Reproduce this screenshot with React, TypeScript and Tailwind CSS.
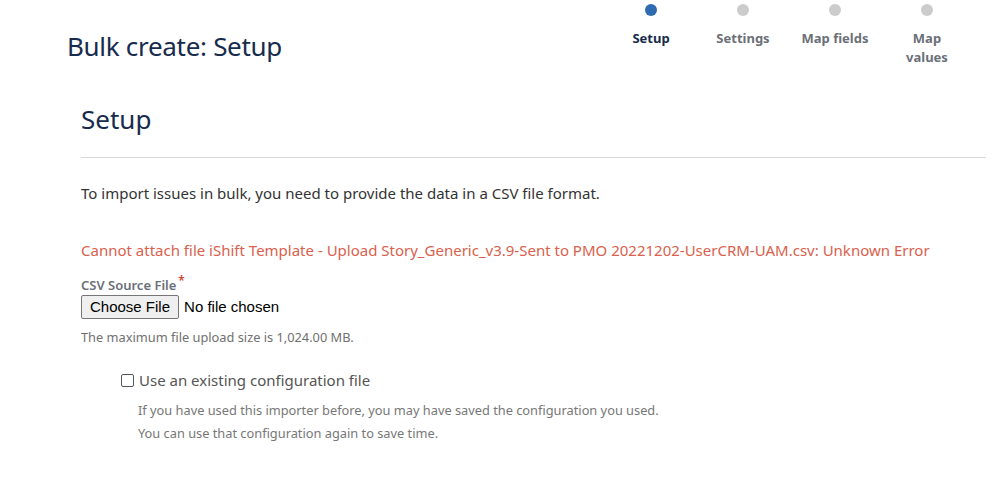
import React from "react";

const steps = [
  { label: "Setup", active: true },
  { label: "Settings", active: false },
  { label: "Map fields", active: false },
  { label: "Map values", active: false },
];

export default function App() {
  return (
    <div className="w-[999px] h-[477px] bg-white overflow-hidden font-['Noto_Sans',sans-serif]">
      <div className="flex items-start justify-between pl-[67px] pr-[26px]">
        <h1 className="mt-[28px] text-[26px] leading-[36px] text-[#172b4d] tracking-[-0.3px]">Bulk create: Setup</h1>
        <div className="flex pt-[4px]">
          {steps.map((s) => (
            <div key={s.label} className="w-[92px] flex flex-col items-center">
              <div className={`w-[12px] h-[12px] rounded-full ${s.active ? "bg-[#2e6bb0]" : "bg-[#cccccc]"}`} />
              <div className={`mt-[13px] text-[13px] leading-[19px] font-bold text-center whitespace-nowrap ${s.active ? "text-[#172b4d]" : "text-[#6b6f78]"}`}>
                {s.label === "Map values" ? (
                  <>
                    Map
                    <br />
                    values
                  </>
                ) : (
                  s.label
                )}
              </div>
            </div>
          ))}
        </div>
      </div>
      <div className="pl-[81px] pr-[13px]">
        <h2 className="mt-[34px] text-[26px] leading-[36px] text-[#172b4d]">Setup</h2>
        <div className="mt-[20px] h-px bg-[#d9d9d9]" />
        <p className="mt-[24px] text-[15px] leading-[22px] text-[#333333]">
          To import issues in bulk, you need to provide the data in a CSV file format.
        </p>
        <p className="mt-[35px] text-[15px] leading-[22px] text-[#d9614d]">
          Cannot attach file iShift Template - Upload Story_Generic_v3.9-Sent to PMO 20221202-UserCRM-UAM.csv: Unknown Error
        </p>
        <div className="mt-[15px] text-[13px] leading-[18px] font-semibold text-[#6b6f78]">
          CSV Source File<span className="text-[#d04437] align-top text-[12px] ml-[2px] relative top-[-4px]">*</span>
        </div>
        <div className="flex items-center mt-[1px] font-['Liberation_Sans',sans-serif] text-[15px]">
          <div className="h-[24px] px-[8px] flex items-center bg-[#efefef] border border-[#767676] rounded-[2px] text-black">
            Choose File
          </div>
          <span className="ml-[5px] text-black">No file chosen</span>
        </div>
        <div className="mt-[9px] text-[12.8px] leading-[18px] text-[#707070]">The maximum file upload size is 1,024.00 MB.</div>
        <div className="ml-[40px] mt-[23px]">
          <label className="flex items-center">
            <span className="w-[13px] h-[13px] border border-[#555] rounded-[2px] bg-white" />
            <span className="ml-[5px] text-[15px] leading-[22px] text-[#555555]">Use an existing configuration file</span>
          </label>
          <div className="ml-[17px] mt-[8px] text-[12.8px] leading-[23px] text-[#777777]">
            <div>If you have used this importer before, you may have saved the configuration you used.</div>
            <div>You can use that configuration again to save time.</div>
          </div>
        </div>
      </div>
    </div>
  );
}
